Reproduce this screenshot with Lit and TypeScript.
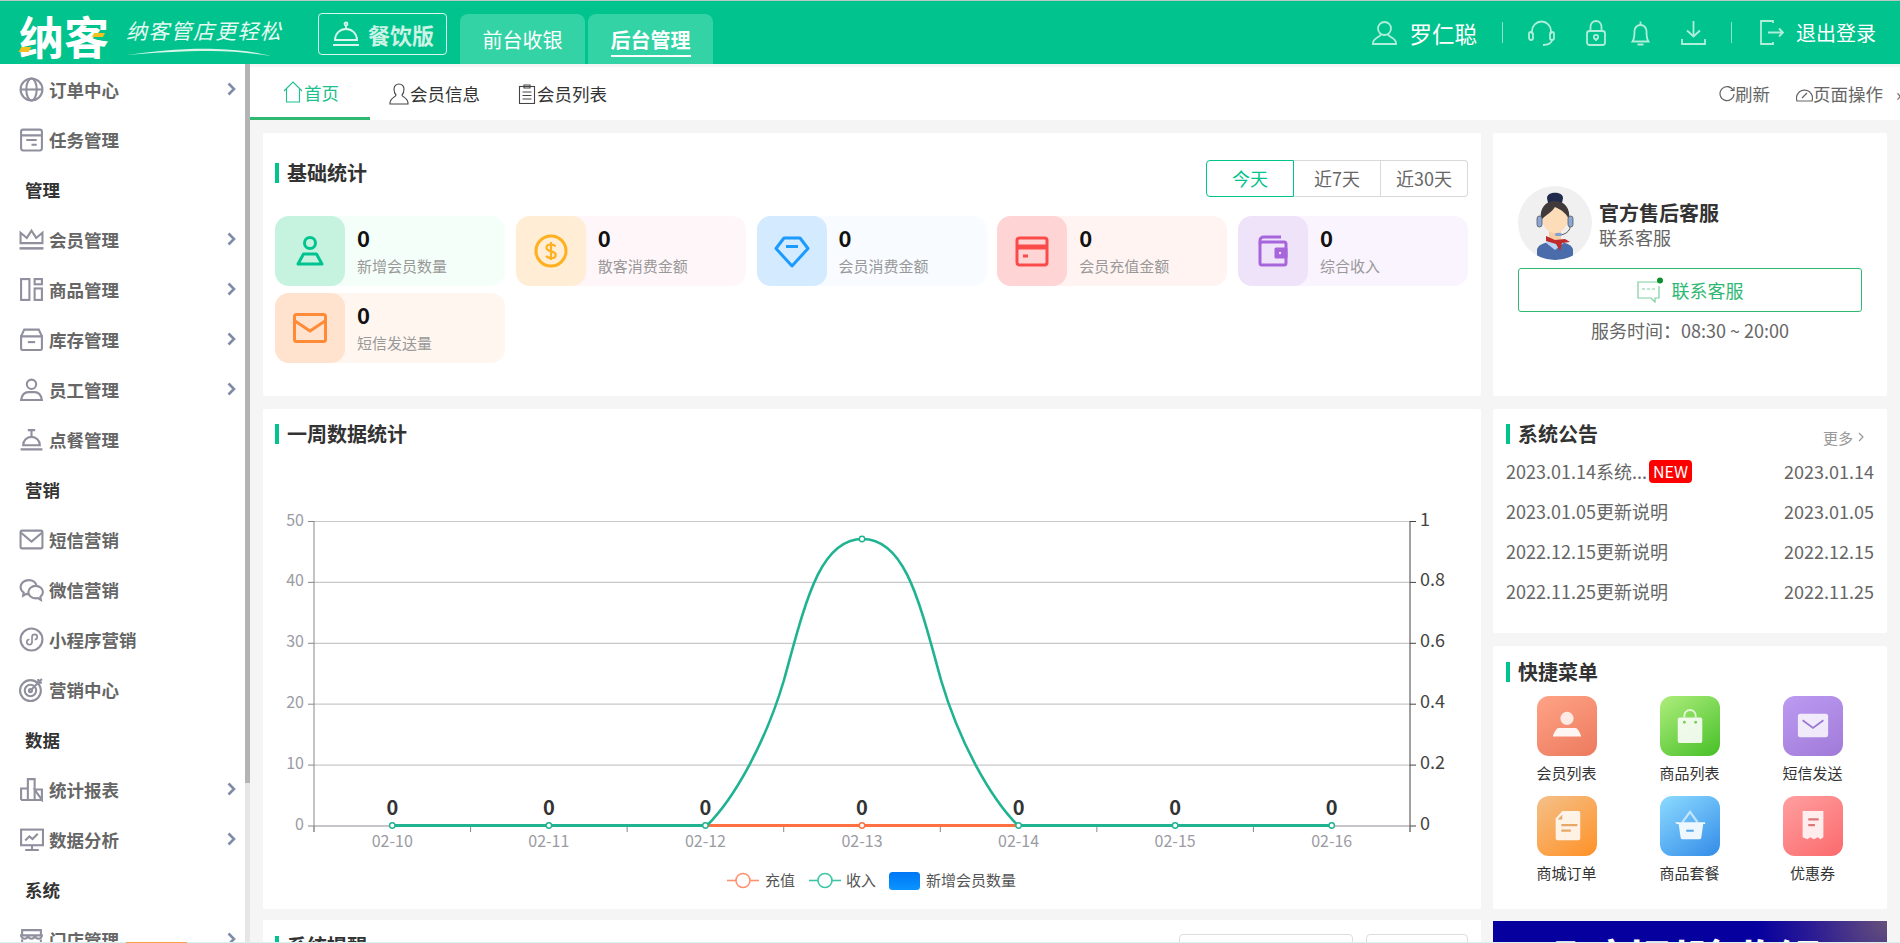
import { LitElement, html, css, svg } from 'lit';
import { customElement } from 'lit/decorators.js';

const ic = {
  globe: svg`<circle cx="12" cy="12" r="10.5"/><ellipse cx="12" cy="12" rx="5" ry="10.5"/><path d="M1.5 12h21"/>`,
  task: svg`<rect x="2" y="2.5" width="20" height="20" rx="2"/><path d="M2 8h20M7 12.5h10M12 17h5"/>`,
  crown: svg`<path d="M1.5 15.5V5.5l6 5 4.5-7 4.5 7 6-5v10z"/><path d="M0.5 20.5h23" stroke-width="2.4"/>`,
  goods: svg`<rect x="2" y="2" width="8" height="20"/><rect x="15" y="2" width="7" height="5"/><rect x="15" y="11" width="7" height="11"/>`,
  stock: svg`<path d="M2 9l3-6.5h14L22 9"/><path d="M2 9h20v11.5a1.5 1.5 0 0 1-1.5 1.5h-17A1.5 1.5 0 0 1 2 20.500z"/><path d="M8.500 14.500h7"/>`,
  staff: svg`<circle cx="12" cy="7" r="4.500"/><path d="M2 22c.8-5 3.500-7.500 7-7.500h6c3.500 0 6.200 2.500 7 7.500z"/>`,
  dish: svg`<path d="M4 17.500a8 8 0 0 1 16 0z"/><path d="M1.500 21.500h21M8.500 3h7M12 3v6"/>`,
  mail: svg`<rect x="1.500" y="3.500" width="21" height="17" rx="1.500"/><path d="M2 5.500l10 8.500 10-8.500"/>`,
  wechat: svg`<path d="M9.500 3C5 3 1.500 6 1.500 9.700c0 2.200 1.200 4 3 5.200L4 18l3-1.800c.8.200 1.600.300 2.500.300"/><path d="M9.500 3c3.700 0 6.800 2.200 7.300 5.500"/><path d="M16 8.500c-3.900 0-7 2.700-7 6s3.100 6 7 6c.8 0 1.500-.100 2.200-.300l2.800 1.800-.5-3c1.500-1.100 2.500-2.700 2.500-4.500 0-3.300-3.100-6-7-6z"/><path d="M6 8h.1M10.500 7h.1M13.500 13h.1M18.500 13h.1"/>`,
  mini: svg`<circle cx="12" cy="12" r="10.500"/><path d="M7.500 14.500c0 1.500 1.200 2.500 2.500 2.500s2.500-1 2.500-2.500v-5c0-1.500 1.200-2.500 2.500-2.500s2.500 1 2.500 2.500-1.200 2.500-2.500 2.500M10 12c-1.300 0-2.500 1-2.500 2.500" stroke-width="1.600"/>`,
  target: svg`<circle cx="11" cy="13" r="10"/><circle cx="11" cy="13" r="5.500"/><circle cx="11" cy="13" r="1.500"/><path d="M11 13L22 2M18.500 2v3.500H22"/>`,
  chart: svg`<path d="M2 22V11h6.500V2h6.500v20M8.500 22V11M15 12h7v10zM2 22h20"/>`,
  monitor: svg`<rect x="2" y="2.500" width="21" height="15"/><path d="M6 13l4-4 3 2.500 5-5M12.500 17.500v4M6 22h13"/>`,
  store: svg`<path d="M3 8V3h18v5"/><path d="M2 8a3.300 3.300 0 0 0 6.700 0 3.300 3.300 0 0 0 6.600 0A3.300 3.300 0 0 0 22 8z"/><path d="M3 12v10h18V12"/>`,
};

const chevron = html`<svg class="chev" width="9" height="14" viewBox="0 0 9 14"><path d="M1.500 1.500L7 7l-5.500 5.500" fill="none" stroke="#7f8ca6" stroke-width="2.600"/></svg>`;

type Nav = { t: string; i?: keyof typeof ic; more?: boolean };
const nav: Nav[] = [
  { t: '订单中心', i: 'globe', more: true },
  { t: '任务管理', i: 'task' },
  { t: '管理' },
  { t: '会员管理', i: 'crown', more: true },
  { t: '商品管理', i: 'goods', more: true },
  { t: '库存管理', i: 'stock', more: true },
  { t: '员工管理', i: 'staff', more: true },
  { t: '点餐管理', i: 'dish' },
  { t: '营销' },
  { t: '短信营销', i: 'mail' },
  { t: '微信营销', i: 'wechat' },
  { t: '小程序营销', i: 'mini' },
  { t: '营销中心', i: 'target' },
  { t: '数据' },
  { t: '统计报表', i: 'chart', more: true },
  { t: '数据分析', i: 'monitor', more: true },
  { t: '系统' },
  { t: '门店管理', i: 'store', more: true },
];

const stats = [
  {
    label: '新增会员数量', bg: '#f5fff9', box: '#c6f3e0', color: '#00c48f',
    icon: svg`<circle cx="18" cy="10" r="5.500"/><path d="M11.500 21h13L30 31H6z"/>`,
  },
  {
    label: '散客消费金额', bg: '#fff6fa', box: '#ffedd6', color: '#ffb01f',
    icon: svg`<circle cx="18" cy="18" r="15"/><path d="M22.500 13.500c-1-1.500-2.500-2-4.500-2-2.500 0-4.500 1.300-4.500 3.300 0 4.700 9.200 2.400 9.200 7 0 2-2 3.400-4.700 3.400-2.200 0-3.800-.8-4.800-2.300M18 9v18" stroke-width="2.200"/>`,
  },
  {
    label: '会员消费金额', bg: '#f8fbff', box: '#d3eaff', color: '#1c9bff',
    icon: svg`<path d="M10 5h16l8 10.500L18 33 2 15.500z"/><path d="M12 13.500h12"/>`,
  },
  {
    label: '会员充值金额', bg: '#fff4f2', box: '#ffd4d4', color: '#fa4a4a',
    icon: svg`<rect x="3" y="5" width="30" height="27" rx="2.500"/><path d="M3 14h30" stroke-width="5"/><path d="M9 23h5" stroke-width="3"/>`,
  },
  {
    label: '综合收入', bg: '#faf4fe', box: '#efe3fa', color: '#a765dc',
    icon: svg`<path d="M5 11V7.500A3.500 3.500 0 0 1 8.500 4H26"/><rect x="5" y="9" width="26" height="23" rx="2"/><rect x="21" y="16" width="10" height="8" fill="currentColor"/><circle cx="25" cy="20" r="1.200" fill="#efe3fa" stroke="none"/>`,
  },
  {
    label: '短信发送量', bg: '#fff6f0', box: '#ffe3cf', color: '#ff8a37',
    icon: svg`<rect x="2.500" y="4.500" width="31" height="27" rx="2"/><path d="M3 11l15 10 15-10"/>`,
  },
];

const notices = [
  { t: '2023.01.14系统...', d: '2023.01.14', isNew: true },
  { t: '2023.01.05更新说明', d: '2023.01.05' },
  { t: '2022.12.15更新说明', d: '2022.12.15' },
  { t: '2022.11.25更新说明', d: '2022.11.25' },
];

const quick = [
  {
    t: '会员列表', bg: 'linear-gradient(150deg,#ffa386,#ec7a5e)',
    icon: svg`<circle cx="18" cy="10" r="7" fill="#fff" opacity=".8"/><path d="M9 20h18c2 0 5 5 6 9H3c1-4 4-9 6-9z" fill="#fff" opacity=".92"/>`,
  },
  {
    t: '商品列表', bg: 'linear-gradient(145deg,#aeee7d,#46bf27)',
    icon: svg`<path d="M12 9V7a6 6 0 0 1 12 0v2" fill="none" stroke="#fff" stroke-opacity=".75" stroke-width="2"/><rect x="5" y="9" width="26" height="27" rx="2" fill="#fff" opacity=".88"/><circle cx="12" cy="14" r="1.500" fill="#7ccf5a"/><circle cx="24" cy="14" r="1.500" fill="#7ccf5a"/>`,
  },
  {
    t: '短信发送', bg: 'linear-gradient(150deg,#bc9bf2,#a07ad8)',
    icon: svg`<rect x="2" y="5" width="32" height="25" rx="2.500" fill="#fff" opacity=".82"/><path d="M7 12l11 8 11-8" fill="none" stroke="#9a78d6" stroke-width="2"/>`,
  },
  {
    t: '商城订单', bg: 'linear-gradient(145deg,#f4c089,#ff9126)',
    icon: svg`<path d="M13 2h17a2 2 0 0 1 2 2v27a2 2 0 0 1-2 2H8a2 2 0 0 1-2-2V10z" fill="#fff" opacity=".85"/><path d="M13 6v5H8z" fill="#e7a766"/><path d="M12 17h17M12 23h10" stroke="#e7a766" stroke-width="2.400"/>`,
  },
  {
    t: '商品套餐', bg: 'linear-gradient(145deg,#8cdbff,#338ce8)',
    icon: svg`<path d="M10 14l8-11 8 11" fill="none" stroke="#fff" stroke-opacity=".6" stroke-width="2.400"/><path d="M2 14h32v2h-2l-2 14a2 2 0 0 1-2 2H10a2 2 0 0 1-2-2L6 16H4z" fill="#fff" opacity=".9"/><path d="M14 23h8" stroke="#5aa8ea" stroke-width="2.200"/>`,
  },
  {
    t: '优惠券', bg: 'linear-gradient(145deg,#ff9fa0,#fb6a6c)',
    icon: svg`<path d="M7 2h22v28l-3 2-3-2-4 2-4-2-3 2-5-2z" fill="#fff" opacity=".85"/><path d="M13 11h11M13 17h7" stroke="#d77" stroke-width="2.400"/>`,
  },
];

const days = ['02-10', '02-11', '02-12', '02-13', '02-14', '02-15', '02-16'];
const AX_L = 314, AX_R = 1410, BASE = 826, STEP_Y = 60.9, STEP_X = (AX_R - AX_L) / 7;

@customElement('app-root')
export class AppRoot extends LitElement {
  static styles = css`
    :host {
      display: block;
      position: relative;
      width: 1900px;
      height: 943px;
      overflow: hidden;
      background: #f5f5f5;
      font-family: "Noto Sans CJK SC", "Liberation Sans", sans-serif;
      color: #333;
    }
    svg { display: block; flex: none; }

    .top {
      box-sizing: border-box;
      height: 64px;
      display: flex;
      align-items: flex-start;
      padding-left: 19px;
      background: #01c38d;
      border-top: 1px solid #b9c6c1;
      color: #fff;
    }
    .logo {
      position: relative;
      width: 89px;
      margin-top: 11px;
      font-size: 45px;
      line-height: 48px;
      font-weight: 700;
      white-space: nowrap;
    }
    .dot { position: absolute; background: #f5c01e; transform: skewX(-30deg); }
    .dot.a { left: 1px; top: 35px; width: 10px; height: 5px; }
    .dot.b { left: 74px; top: 21px; width: 11px; height: 4px; }
    .slogan { width: 156px; margin: 16px 0 0 18px; }
    .slogan span {
      display: block;
      font-size: 21px;
      line-height: 27px;
      font-style: italic;
      letter-spacing: 1.300px;
      white-space: nowrap;
      color: #e6faf3;
    }
    .slogan svg { margin-top: 4px; }
    .edition {
      box-sizing: border-box;
      width: 129px;
      height: 42px;
      margin: 12px 0 0 36px;
      display: flex;
      align-items: center;
      gap: 8px;
      padding-left: 13px;
      border: 1.500px solid #d8f6ec;
      border-radius: 4px;
      font-size: 22px;
      font-weight: 700;
      color: #cdf3e6;
    }
    .mods { display: flex; gap: 3px; margin: 13px 0 0 13px; }
    .mod {
      width: 125px;
      height: 50px;
      display: flex;
      flex-direction: column;
      align-items: center;
      background: #33d3a6;
      border-radius: 8px 8px 0 0;
      font-size: 20px;
      line-height: 52px;
    }
    .mod.on { font-weight: 700; }
    .mod.on span { height: 41px; border-bottom: 2px solid #fff; line-height: 52px; }
    .user {
      margin-left: auto;
      height: 63px;
      display: flex;
      align-items: center;
      gap: 25px;
      padding-right: 24px;
    }
    .who { display: flex; align-items: center; gap: 12px; font-size: 22.500px; }
    .sep { width: 1px; height: 21px; background: #8fe3c8; }
    .user svg { fill: none; stroke: #aeeeda; stroke-width: 1.800; }
    .user .wide { margin-right: 6px; }
    .user .wider { margin-left: 6px; }
    .out { display: flex; align-items: center; gap: 12px; margin-left: 2px; font-size: 20px; }

    .body { display: flex; height: 879px; }
    .side { width: 245px; background: #fff; overflow: hidden; }
    .nav {
      height: 50px;
      display: flex;
      align-items: center;
      gap: 5px;
      padding: 0 9px 0 19px;
      font-size: 17.500px;
      font-weight: 700;
      color: #666;
    }
    .nav svg.i { fill: none; stroke: #8f8f9e; stroke-width: 2; }
    .nav .chev { margin-left: auto; }
    .nav.head { padding-left: 25px; color: #333; }
    .bar { width: 5px; background: #e6e6e6; }
    .thumb { height: 719px; background: #b4b4b4; }

    .main { flex: 1; min-width: 0; }
    .tabs {
      height: 53px;
      margin-top: 3px;
      display: flex;
      background: #fff;
      font-size: 17.500px;
      color: #333;
      overflow: hidden;
    }
    .tab { display: flex; align-items: center; padding: 0 19px; white-space: nowrap; }
    .tab svg { fill: none; stroke: #444; stroke-width: 1.100; margin-right: 1px; }
    .tab.on {
      box-sizing: border-box;
      width: 120px;
      padding: 0 0 0 33px;
      border-bottom: 3px solid #2eb872;
      color: #1fbf8f;
    }
    .tab.on svg { stroke: #1fbf8f; }
    .acts { margin: 0 -8px 0 auto; display: flex; align-items: center; gap: 26px; color: #666; }
    .act { display: flex; align-items: center; white-space: nowrap; }
    .act svg { fill: none; stroke: #666; stroke-width: 1.200; }
    .fold { width: 12px; margin-left: -13px; }

    .cols { display: flex; gap: 12px; padding: 13px 13px 0; }
    .left { width: 1218px; flex: none; }
    .right { width: 394px; flex: none; }
    .card { background: #fff; border-radius: 2px; }
    .sec {
      display: flex;
      align-items: center;
      height: 20px;
      gap: 8px;
      font-size: 20px;
      line-height: 20px;
      font-weight: 700;
      color: #333;
    }
    .sec::before { content: ""; width: 4px; height: 20px; background: #01c38d; }

    .basic { box-sizing: border-box; height: 263px; padding: 27px 13px 0 12px; }
    .basic-head { display: flex; justify-content: space-between; align-items: flex-start; height: 37px; margin-bottom: 19px; }
    .basic-head .sec { margin-top: 3px; }
    .seg { display: flex; font-size: 18px; color: #666; }
    .seg div {
      box-sizing: border-box;
      width: 87px;
      height: 37px;
      line-height: 35px;
      text-align: center;
      border: 1px solid #d9d9d9;
      border-left: 0;
    }
    .seg div:last-child { border-radius: 0 4px 4px 0; }
    .seg .on { width: 88px; border: 1px solid #01c38d; border-radius: 4px 0 0 4px; color: #01c38d; }
    .grid { display: grid; grid-template-columns: repeat(5, 230px); gap: 7px 10.750px; }
    .stat { display: flex; height: 70px; border-radius: 14px; }
    .stat-i {
      width: 70px;
      display: flex;
      align-items: center;
      justify-content: center;
      border-radius: 14px;
    }
    .stat-i svg { fill: none; stroke: currentColor; stroke-width: 3; stroke-linejoin: round; }
    .stat-t { padding: 7px 0 0 12px; }
    .stat-t b { display: block; font-size: 22px; line-height: 28px; color: #111; }
    .stat-t span { display: block; margin-top: 5px; font-size: 15px; line-height: 20px; color: #999; }

    .week { height: 500px; margin-top: 13px; box-sizing: border-box; padding: 15px 0 0; }
    .week .sec { margin: 0 0 6px 12px; }
    .week text { font-family: "Noto Sans CJK SC", "Liberation Sans", sans-serif; }

    .remind {
      display: flex;
      height: 60px;
      margin-top: 11px;
      padding: 14px 13px 0 12px;
      gap: 13px;
    }
    .remind .sec { margin: 2px auto 0 0; }
    .box { box-sizing: border-box; height: 40px; border: 1px solid #ddd; border-radius: 4px; }
    .box.a { width: 174px; }
    .box.b { width: 102px; }

    .service { box-sizing: border-box; height: 263px; padding: 53px 25px 0; }
    .svc-head { display: flex; gap: 7px; }
    .svc-name { padding-top: 14px; }
    .svc-name b { display: block; font-size: 20px; line-height: 25px; color: #333; }
    .svc-name span { display: block; font-size: 18px; line-height: 24px; color: #666; }
    .svc-btn {
      box-sizing: border-box;
      height: 44px;
      margin-top: 8px;
      display: flex;
      align-items: center;
      justify-content: center;
      gap: 9px;
      border: 1px solid #2eb872;
      border-radius: 3px;
      font-size: 18px;
      color: #2eb872;
    }
    .svc-time { margin-top: 5px; font-size: 18px; line-height: 26px; text-align: center; color: #666; }

    .news { box-sizing: border-box; height: 224px; margin-top: 13px; padding: 15px 13px 0; }
    .news-head { display: flex; justify-content: space-between; height: 20px; margin-bottom: 7px; }
    .more { display: flex; align-items: center; gap: 5px; margin: 3px 10px 0 0; height: 20px; font-size: 15px; color: #999; }
    .row { display: flex; align-items: center; height: 40px; font-size: 18px; color: #666; }
    .row .d { margin-left: auto; }
    .new {
      margin-left: 2px;
      padding: 0 4px;
      height: 23px;
      line-height: 23px;
      border-radius: 4px;
      background: #f00;
      color: #fff;
      font-size: 16px;
    }

    .quick { box-sizing: border-box; height: 263px; margin-top: 13px; padding-top: 16px; }
    .quick .sec { margin-left: 13px; }
    .q-grid {
      display: grid;
      grid-template-columns: repeat(3, 123px);
      row-gap: 10px;
      margin: 14px 0 0 12px;
    }
    .q { display: flex; flex-direction: column; align-items: center; }
    .q-i { width: 60px; height: 60px; display: flex; align-items: center; justify-content: center; border-radius: 12px; }
    .q span { margin-top: 4px; font-size: 15px; line-height: 26px; color: #333; }

    .banner {
      height: 40px;
      margin-top: 12px;
      padding: 15px 0 0 59px;
      background: radial-gradient(circle 130px at 100% 0, #66507a, #2a1a95 60%, #06009e 100%);
      color: #fff;
      font-size: 45px;
      line-height: 45px;
      font-weight: 700;
      white-space: nowrap;
      overflow: hidden;
    }

    .edge { position: absolute; left: 0; right: 0; bottom: 0; height: 1px; background: #cff5f3; }
    .edge i { position: absolute; left: 126px; width: 61px; height: 1px; background: #f8a24a; }
  `;

  private chart() {
    const xAt = (i: number) => AX_L + STEP_X * (i + 0.5);
    const ticks = [0, 1, 2, 3, 4, 5];
    const right = ['0', '0.2', '0.4', '0.6', '0.8', '1'];
    return html`<svg width="1218" height="459" viewBox="263 450 1218 459">
      <defs><linearGradient id="blue" x1="0" y1="0" x2="0" y2="1"><stop offset="0" stop-color="#0076f5"/><stop offset="1" stop-color="#0a94ff"/></linearGradient></defs>
      ${ticks.map(n => svg`
        ${n ? svg`<line x1=${AX_L} x2=${AX_R} y1=${BASE - n * STEP_Y} y2=${BASE - n * STEP_Y} stroke="#c8c8c8" stroke-width="1.200"/>` : ''}
        <line x1=${AX_L - 6} x2=${AX_L} y1=${BASE - n * STEP_Y} y2=${BASE - n * STEP_Y} stroke="#888"/>
        <line x1=${AX_R} x2=${AX_R + 6} y1=${BASE - n * STEP_Y} y2=${BASE - n * STEP_Y} stroke="#444"/>
        <text x="304" y=${BASE - n * STEP_Y + 4} text-anchor="end" font-size="16" fill="#9b9ba3">${n * 10}</text>
        <text x="1420" y=${BASE - n * STEP_Y + 4} font-size="18" fill="#444">${right[n]}</text>`)}
      <line x1=${AX_L} x2=${AX_L} y1="521" y2="832" stroke="#888"/>
      <line x1=${AX_R} x2=${AX_R} y1="521" y2="832" stroke="#444"/>
      <line x1=${AX_L} x2=${AX_R} y1=${BASE} y2=${BASE} stroke="#8b8b95" stroke-width="1.200"/>
      ${[0, 1, 2, 3, 4, 5, 6, 7].map(i => svg`<line x1=${AX_L + i * STEP_X} x2=${AX_L + i * STEP_X} y1=${BASE} y2=${BASE + 6} stroke="#888"/>`)}
      <path d="M392.500 825.500H1332" stroke="#ff7043" stroke-width="3" fill="none"/>
      <path d="M392.500 825.500H706.500M1018.500 825.500H1332" stroke="#1fb391" stroke-width="3" fill="none"/>
      <path d="M706.500 826C735 798 766 741 784 680C806 600 820 539 862.500 539C905 539 919 600 941 680C959 741 990 798 1018.500 826" stroke="#1fb391" stroke-width="2.600" fill="none"/>
      ${days.map((d, i) => svg`
        <text x=${xAt(i)} y="847" text-anchor="middle" font-size="16" fill="#9b9ba3">${d}</text>
        <text x=${xAt(i)} y="815" text-anchor="middle" font-size="20" font-weight="700" fill="#333">0</text>
        <circle cx=${xAt(i)} cy="825.500" r="2.700" fill="#fff" stroke=${i === 3 ? '#ff7043' : '#1fb391'} stroke-width="1.400"/>`)}
      <circle cx=${xAt(3)} cy="539" r="2.700" fill="#fff" stroke="#1fb391" stroke-width="1.400"/>
      <path d="M727 880.500h32" stroke="#ff9070" stroke-width="1.600"/>
      <circle cx="743" cy="880.500" r="7" fill="#fff" stroke="#ff9070" stroke-width="1.600"/>
      <text x="765" y="886" font-size="15" fill="#555">充值</text>
      <path d="M809 880.500h32" stroke="#3cc6a5" stroke-width="1.600"/>
      <circle cx="825" cy="880.500" r="7" fill="#fff" stroke="#3cc6a5" stroke-width="1.600"/>
      <text x="846" y="886" font-size="15" fill="#555">收入</text>
      <rect x="889" y="872" width="31" height="18" rx="3.500" fill="url(#blue)"/>
      <text x="926" y="886" font-size="15" fill="#555">新增会员数量</text>
    </svg>`;
  }

  private avatar() {
    return html`<svg width="74" height="74" viewBox="0 0 74 74">
      <defs><clipPath id="round"><circle cx="37" cy="37" r="37"/></clipPath></defs>
      <circle cx="37" cy="37" r="37" fill="#f0f0f0"/>
      <g clip-path="url(#round)">
        <path d="M19 74V64c0-5 8-8 18-9 10 1 18 4 18 9v10z" fill="#4a6cab"/>
        <path d="M27 56l10-3 10 3-10 8z" fill="#b9d2f5"/>
        <rect x="31" y="42" width="12" height="13" fill="#f7cda6"/>
        <ellipse cx="37" cy="32" rx="13" ry="15" fill="#fddcb9"/>
        <path d="M29 12c0-7 16-7 16 0l-1 5H30z" fill="#1f2a4d"/>
        <path d="M23 34c-2-12 5-19 14-19s16 7 14 19c-2-6-7-10-14-13-3 5-9 8-14 13z" fill="#403b3a"/>
        <rect x="19" y="30" width="5" height="11" rx="2.500" fill="#8aa6d8" stroke="#555" stroke-width=".8"/>
        <rect x="50" y="30" width="5" height="11" rx="2.500" fill="#8aa6d8" stroke="#555" stroke-width=".8"/>
        <path d="M52 41c0 4-5 8-11 8" fill="none" stroke="#555" stroke-width="1"/>
        <rect x="37" y="47" width="7" height="3" rx="1.500" fill="#7fa0d6"/>
        <path d="M28 50l9 4 10-1 5 3-8 1-2 8-4-7-10-3z" fill="#bf2a2c"/>
      </g>
    </svg>`;
  }

  render() {
    return html`
      <header class="top">
        <div class="logo">纳客<i class="dot a"></i><i class="dot b"></i></div>
        <div class="slogan">
          <span>纳客管店更轻松</span>
          <svg width="146" height="8" viewBox="0 0 146 8"><path d="M1 7C30 3 60 0 90 1c20 .5 40 3 55 7-20-3-40-5-60-5C55 3 25 5 1 7z" fill="#d6f6ea"/></svg>
        </div>
        <div class="edition">
          <svg width="28" height="27" viewBox="0 0 28 27" fill="none" stroke="#d8f6ec" stroke-width="1.800"><path d="M3 19a11 11 0 0 1 22 0z"/><path d="M1 24h26M14 8V4"/><circle cx="14" cy="3" r="1.500"/></svg>
          餐饮版
        </div>
        <div class="mods">
          <div class="mod">前台收银</div>
          <div class="mod on"><span>后台管理</span></div>
        </div>
        <div class="user">
          <div class="who">
            <svg width="25" height="25" viewBox="0 0 25 25"><circle cx="12.500" cy="8.500" r="6.500"/><path d="M9 14c0 3-8 4-8 9v1h23v-1c0-5-8-6-8-9"/></svg>
            罗仁聪
          </div>
          <i class="sep"></i>
          <svg class="wide" width="27" height="26" viewBox="0 0 27 26"><path d="M4 14V11a9.500 9.500 0 0 1 19 0v3"/><rect x="1" y="12" width="4" height="8" rx="2"/><rect x="22" y="12" width="4" height="8" rx="2"/><path d="M24 20c0 3-4 5-9 5"/></svg>
          <svg width="20" height="26" viewBox="0 0 20 26"><rect x="1" y="11" width="18" height="14" rx="2.500"/><path d="M4.500 11V6.500a5.500 5.500 0 0 1 11 0V11"/><circle cx="10" cy="17" r="2.200"/><path d="M10 19v2"/></svg>
          <svg width="19" height="26" viewBox="0 0 19 26"><path d="M1.500 21.500C3.500 19 3.500 15 3.500 11a6 6 0 0 1 12 0c0 4 0 8 2 10.500z"/><path d="M9.500 5V1.500M6.500 24.500h6"/></svg>
          <svg class="wider" width="25" height="26" viewBox="0 0 25 26"><path d="M12.500 1v15M6 10.500l6.500 6 6.500-6M1 19v5h23v-5"/></svg>
          <i class="sep"></i>
          <div class="out">
            <svg width="25" height="25" viewBox="0 0 25 25"><path d="M14 3V1H2v23h12v-2M9 12.500h15M20 8.500l4 4-4 4"/></svg>
            退出登录
          </div>
        </div>
      </header>

      <div class="body">
        <aside class="side">
          ${nav.map(n => n.i
            ? html`<div class="nav">
                <svg class="i" width="25" height="25" viewBox="0 0 24 24">${ic[n.i]}</svg>
                ${n.t}${n.more ? chevron : ''}
              </div>`
            : html`<div class="nav head">${n.t}</div>`)}
        </aside>
        <div class="bar"><div class="thumb"></div></div>

        <div class="main">
          <nav class="tabs">
            <div class="tab on">
              <svg width="20" height="22" viewBox="0 0 20 22"><path d="M1 10L10 1l9 9M3.500 8v13h13V8"/></svg>首页
            </div>
            <div class="tab">
              <svg width="20" height="22" viewBox="0 0 20 22"><path d="M10 1a5 5 0 0 0-5 5c0 3 1 5 2 6 0 2-6 3-6 8v1h18v-1c0-5-6-6-6-8 1-1 2-3 2-6a5 5 0 0 0-5-5z"/></svg>会员信息
            </div>
            <div class="tab">
              <svg width="18" height="20" viewBox="0 0 18 20"><rect x="1.500" y="2.500" width="15" height="17"/><path d="M6 1h6v3H6zM4.500 8h9M4.500 11.500h9M4.500 15h9"/></svg>会员列表
            </div>
            <div class="acts">
              <div class="act"><svg width="16" height="18" viewBox="0 0 16 18"><path d="M14 5a7 7 0 1 0 1 4M15 2v3.500h-3.500"/></svg>刷新</div>
              <div class="act"><svg width="17" height="18" viewBox="0 0 17 18"><path d="M1 16a8 8 0 1 1 15 0zM6 13l5-5"/></svg>页面操作</div>
              <div class="fold">»</div>
            </div>
          </nav>

          <div class="cols">
            <div class="left">
              <section class="card basic">
                <div class="basic-head">
                  <div class="sec">基础统计</div>
                  <div class="seg"><div class="on">今天</div><div>近7天</div><div>近30天</div></div>
                </div>
                <div class="grid">
                  ${stats.map(s => html`<div class="stat" style="background:${s.bg}">
                    <div class="stat-i" style="background:${s.box};color:${s.color}">
                      <svg width="36" height="36" viewBox="0 0 36 36">${s.icon}</svg>
                    </div>
                    <div class="stat-t"><b>0</b><span>${s.label}</span></div>
                  </div>`)}
                </div>
              </section>

              <section class="card week">
                <div class="sec">一周数据统计</div>
                ${this.chart()}
              </section>

              <section class="card remind">
                <div class="sec">系统提醒</div>
                <div class="box a"></div>
                <div class="box b"></div>
              </section>
            </div>

            <div class="right">
              <section class="card service">
                <div class="svc-head">
                  ${this.avatar()}
                  <div class="svc-name"><b>官方售后客服</b><span>联系客服</span></div>
                </div>
                <div class="svc-btn">
                  <svg width="26" height="26" viewBox="0 0 26 26" fill="none"><path d="M22 5H1v16h13l4 4v-4h4V9" stroke="#7fcf9f" stroke-width="1.200"/><path d="M5 12h14" stroke="#7fcf9f" stroke-width="1.200" stroke-dasharray="3 2"/><circle cx="23" cy="3.500" r="3" fill="#0f8f33"/></svg>
                  联系客服
                </div>
                <div class="svc-time">服务时间：08:30 ~ 20:00</div>
              </section>

              <section class="card news">
                <div class="news-head">
                  <div class="sec">系统公告</div>
                  <div class="more">更多<svg width="6" height="10" viewBox="0 0 6 10"><path d="M1 1l4 4-4 4" fill="none" stroke="#999" stroke-width="1.200"/></svg></div>
                </div>
                ${notices.map(n => html`<div class="row">
                  <span>${n.t}</span>${n.isNew ? html`<span class="new">NEW</span>` : ''}
                  <span class="d">${n.d}</span>
                </div>`)}
              </section>

              <section class="card quick">
                <div class="sec">快捷菜单</div>
                <div class="q-grid">
                  ${quick.map(q => html`<div class="q">
                    <div class="q-i" style="background:${q.bg}"><svg width="34" height="34" viewBox="0 0 36 36">${q.icon}</svg></div>
                    <span>${q.t}</span>
                  </div>`)}
                </div>
              </section>

              <div class="banner">即刻刷脸收银</div>
            </div>
          </div>
        </div>
      </div>
      <div class="edge"><i></i></div>
    `;
  }
}
